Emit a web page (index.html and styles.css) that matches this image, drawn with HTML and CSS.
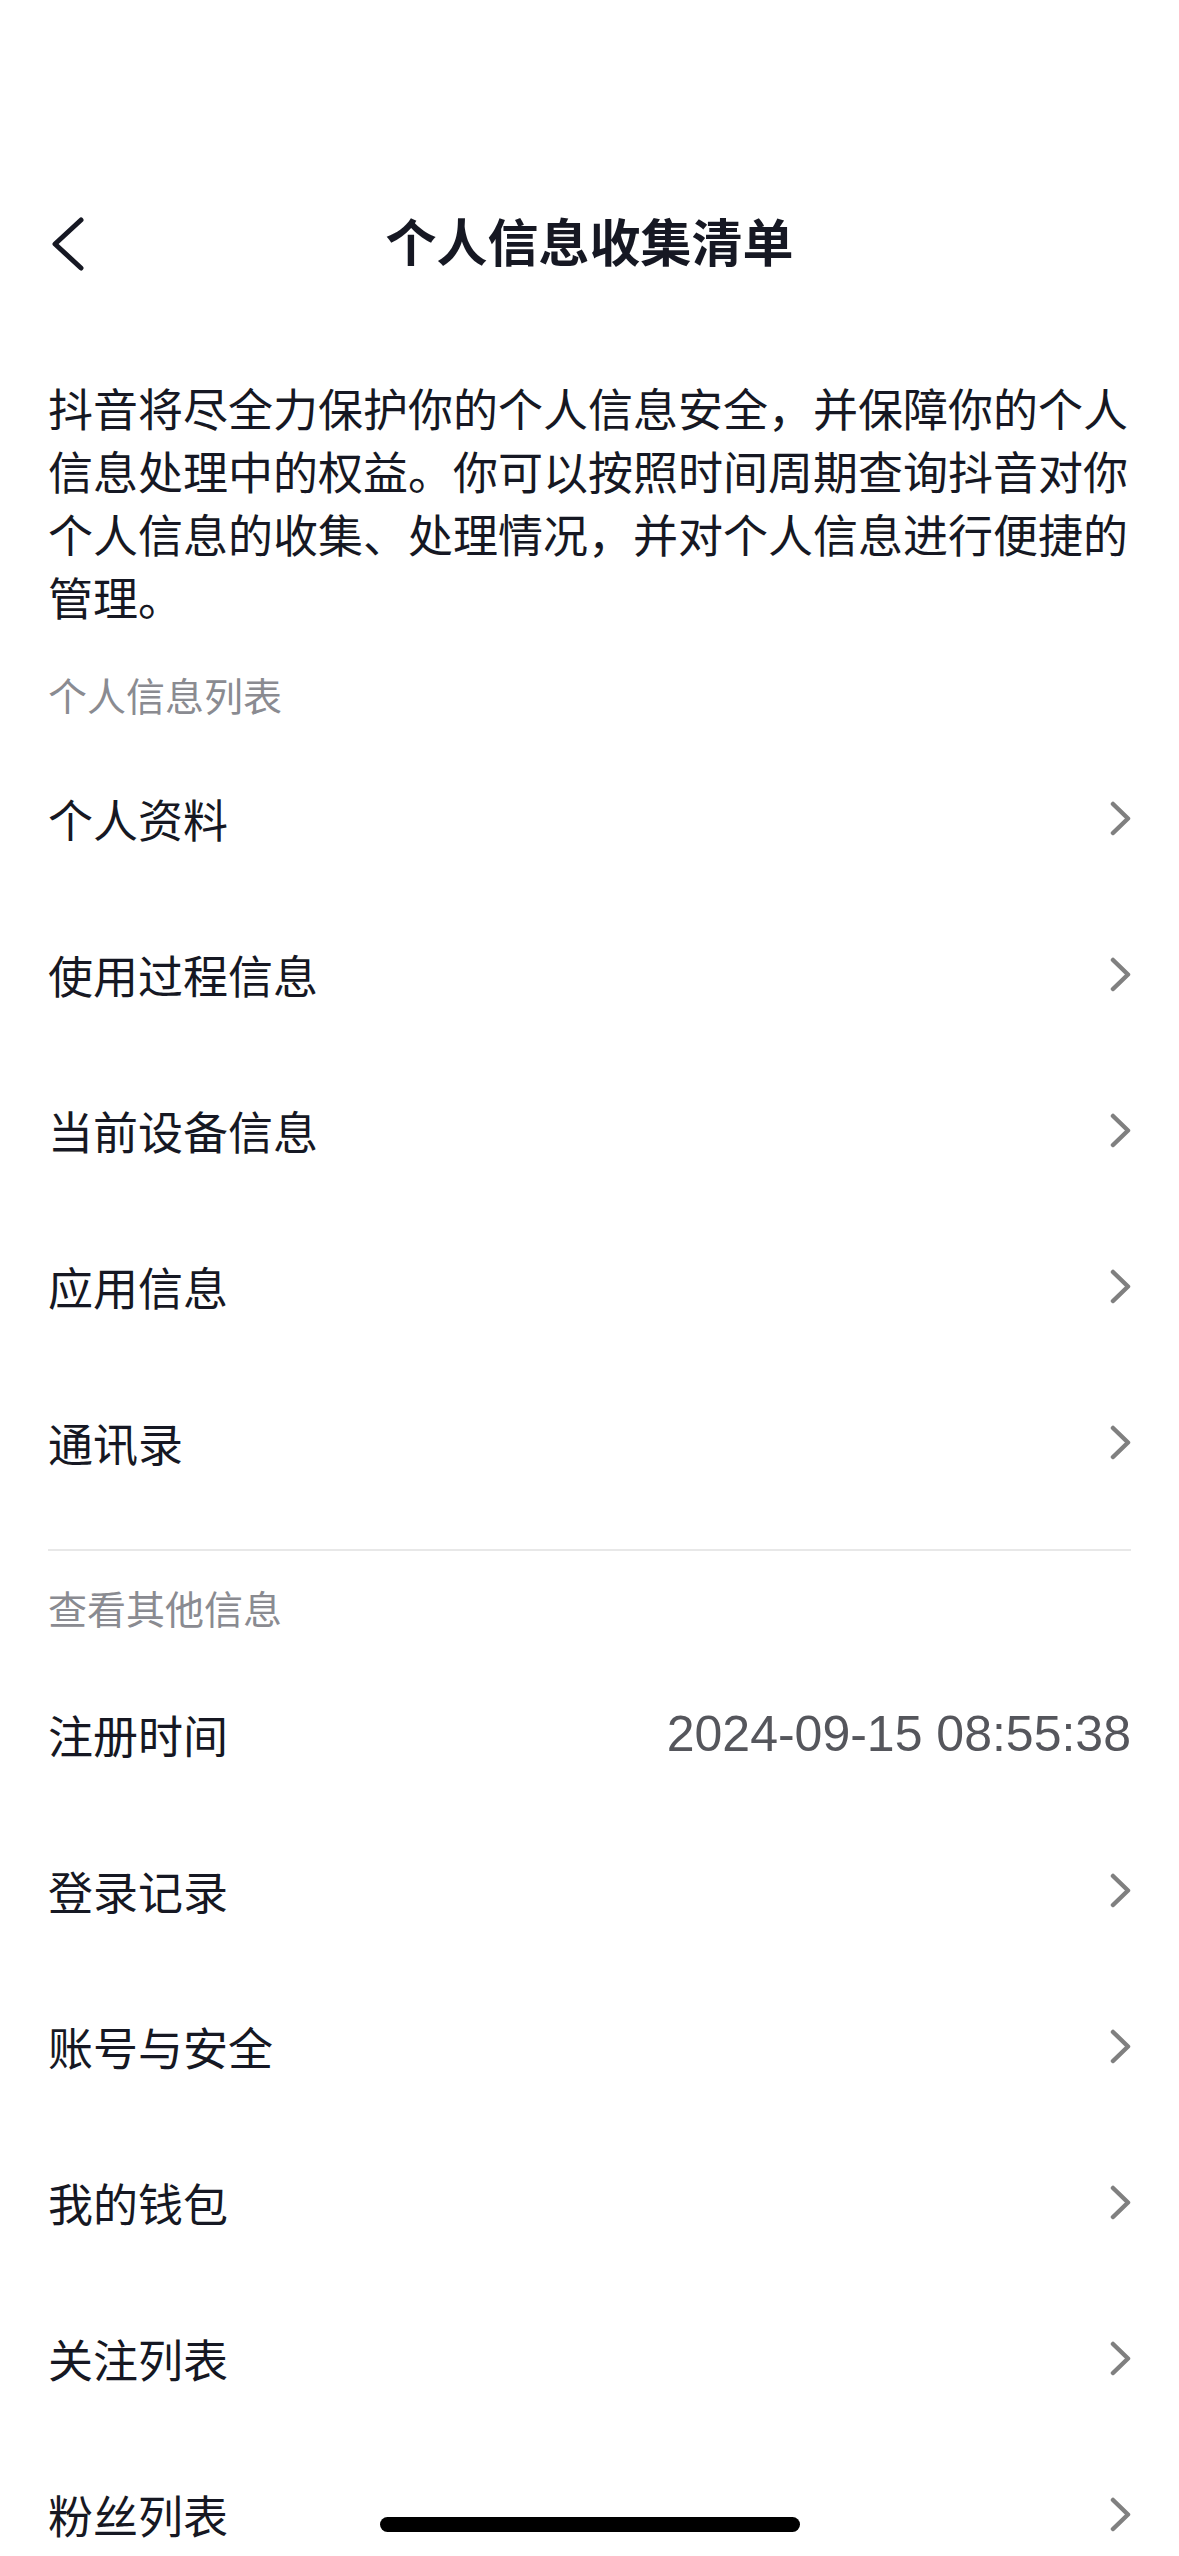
FILE: index.html
```html
<!DOCTYPE html>
<html lang="zh-CN">
<head>
  <meta charset="UTF-8">
  <meta name="viewport" content="width=device-width, initial-scale=1.0">
  <title>个人信息收集清单</title>
  <link rel="stylesheet" href="styles.css">
</head>
<body>
  <div class="page">
    <!-- Nav bar -->
    <header class="nav">
      <a class="nav-back" href="#" aria-label="返回">
        <svg width="36" height="56" viewBox="0 0 36 56">
          <path d="M31 4 L5 28 L31 52" fill="none" stroke="#161823" stroke-width="5" stroke-linecap="round" stroke-linejoin="round"/>
        </svg>
      </a>
      <h1 class="nav-title">个人信息收集清单</h1>
      <span></span>
    </header>

    <p class="intro">抖音将尽全力保护你的个人信息安全，并保障你的个人信息处理中的权益。你可以按照时间周期查询抖音对你个人信息的收集、处理情况，并对个人信息进行便捷的管理。</p>

    <!-- Personal info list -->
    <section class="group">
      <h2 class="group-title">个人信息列表</h2>
      <a class="row" href="#"><span class="row-label">个人资料</span><svg class="arrow" viewBox="0 0 22 35"><path d="M3 3 L18 17.5 L3 32"/></svg></a>
      <a class="row" href="#"><span class="row-label">使用过程信息</span><svg class="arrow" viewBox="0 0 22 35"><path d="M3 3 L18 17.5 L3 32"/></svg></a>
      <a class="row" href="#"><span class="row-label">当前设备信息</span><svg class="arrow" viewBox="0 0 22 35"><path d="M3 3 L18 17.5 L3 32"/></svg></a>
      <a class="row" href="#"><span class="row-label">应用信息</span><svg class="arrow" viewBox="0 0 22 35"><path d="M3 3 L18 17.5 L3 32"/></svg></a>
      <a class="row" href="#"><span class="row-label">通讯录</span><svg class="arrow" viewBox="0 0 22 35"><path d="M3 3 L18 17.5 L3 32"/></svg></a>
    </section>

    <hr class="divider">

    <!-- Other info -->
    <section class="group">
      <h2 class="group-title">查看其他信息</h2>
      <div class="row"><span class="row-label">注册时间</span><span class="row-value">2024-09-15 08:55:38</span></div>
      <a class="row" href="#"><span class="row-label">登录记录</span><svg class="arrow" viewBox="0 0 22 35"><path d="M3 3 L18 17.5 L3 32"/></svg></a>
      <a class="row" href="#"><span class="row-label">账号与安全</span><svg class="arrow" viewBox="0 0 22 35"><path d="M3 3 L18 17.5 L3 32"/></svg></a>
      <a class="row" href="#"><span class="row-label">我的钱包</span><svg class="arrow" viewBox="0 0 22 35"><path d="M3 3 L18 17.5 L3 32"/></svg></a>
      <a class="row" href="#"><span class="row-label">关注列表</span><svg class="arrow" viewBox="0 0 22 35"><path d="M3 3 L18 17.5 L3 32"/></svg></a>
      <a class="row" href="#"><span class="row-label">粉丝列表</span><svg class="arrow" viewBox="0 0 22 35"><path d="M3 3 L18 17.5 L3 32"/></svg></a>
    </section>
  </div>

  <div class="home-indicator"></div>
</body>
</html>
```

FILE: styles.css
```css
body {
  margin: 0;
  padding: 0;
  background: #fff;
  color: #161823;
  font-family: Roboto, "Noto Sans CJK SC", sans-serif;
}

.page {
  padding: 185px 48px 0;
}

.nav {
  display: grid;
  grid-template-columns: 1fr auto 1fr;
  align-items: center;
  height: 120px;
  margin: 0 -48px;
}

.nav-back {
  display: flex;
  padding-left: 50px;
  margin-top: -3px;
}

.nav-title {
  margin: 0;
  font-size: 51px;
  font-weight: 600;
  line-height: 60px;
  color: #161823;
}

.intro {
  margin: 75px 0 0;
  font-size: 45px;
  line-height: 63px;
}

.group-title {
  margin: 42px 0 18px;
  height: 48px;
  font-size: 39px;
  font-weight: 400;
  line-height: 48px;
  color: #8a8b91;
}

.row {
  display: flex;
  align-items: center;
  justify-content: space-between;
  height: 156px;
  color: #161823;
  text-decoration: none;
}

.row-label {
  font-size: 45px;
}

.row-value {
  font-family: "Liberation Sans", Arial, sans-serif;
  font-size: 50px;
  color: #55565c;
}

.arrow {
  width: 22px;
  height: 35px;
  margin-right: -1px;
  fill: none;
  stroke: #808080;
  stroke-width: 4.5;
  stroke-linecap: round;
  stroke-linejoin: round;
}

.divider {
  margin: 29px 0 0;
  border: 0;
  height: 2px;
  background: #e8e8e8;
}

.divider + .group .group-title {
  margin-top: 36px;
  margin-bottom: 21px;
}

.home-indicator {
  position: fixed;
  left: 50%;
  bottom: 24px;
  width: 420px;
  height: 15px;
  margin-left: -210px;
  border-radius: 8px;
  background: #000;
}
```
